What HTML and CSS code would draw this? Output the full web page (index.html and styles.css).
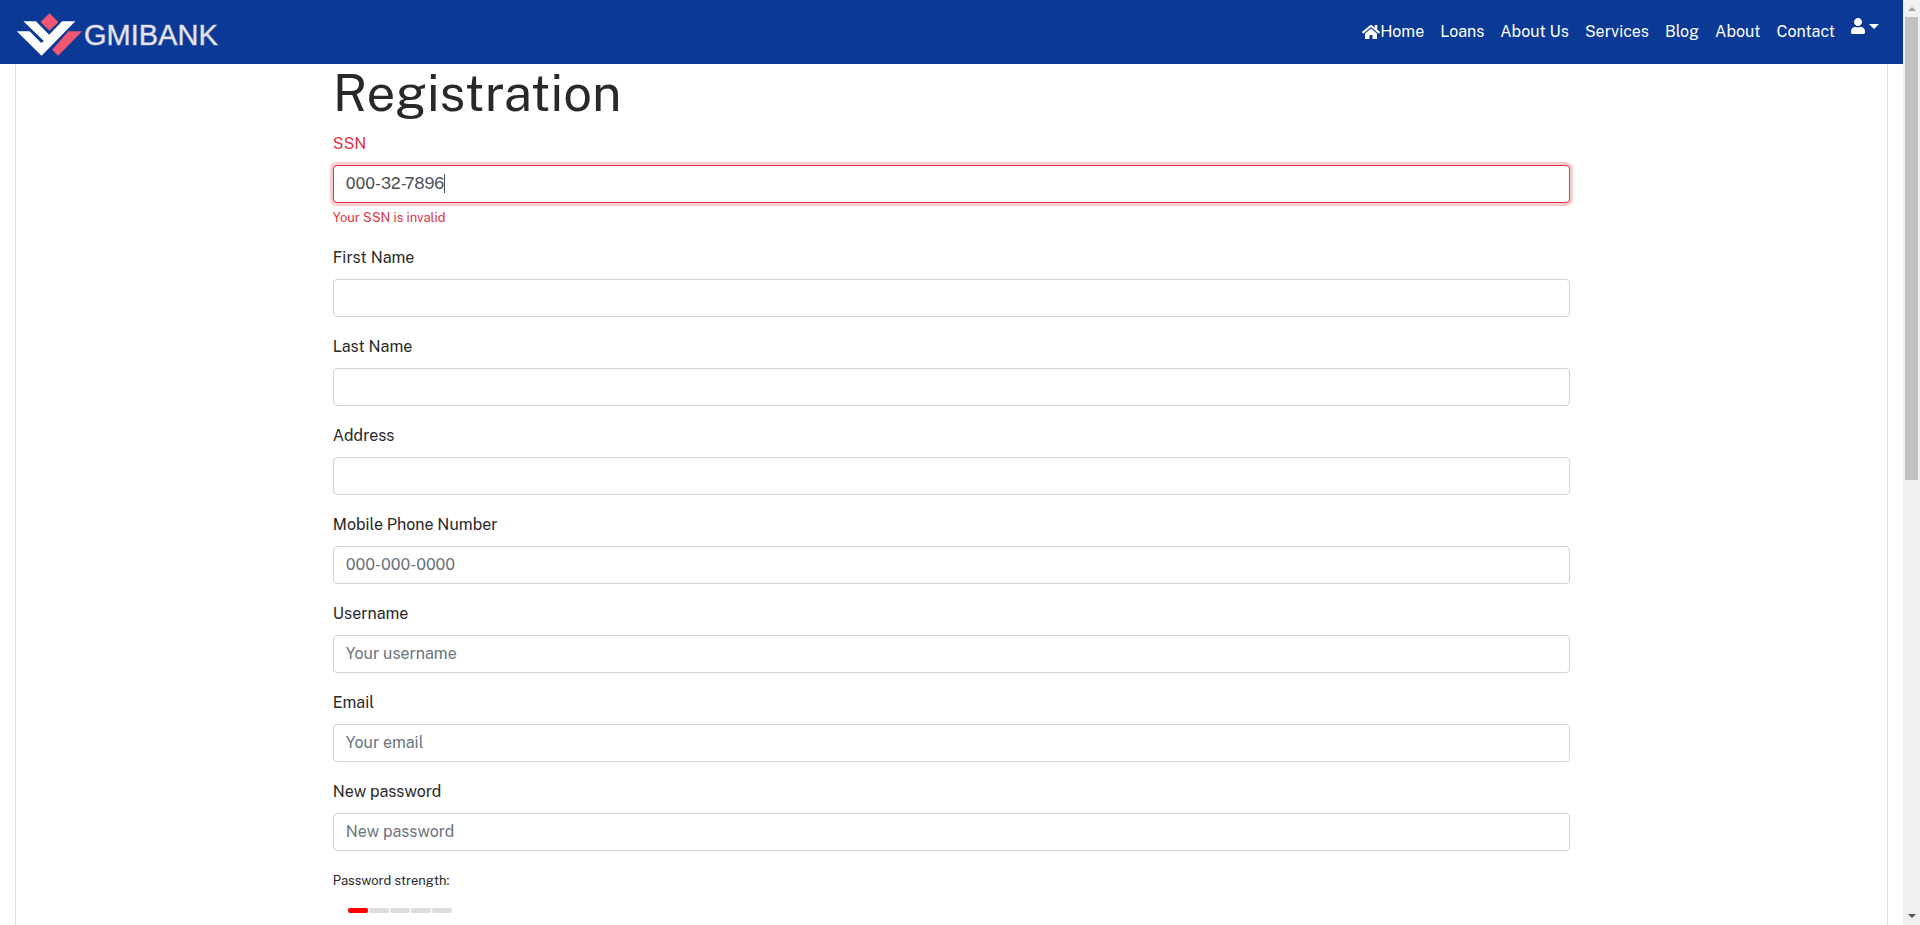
FILE: index.html
```html
<!DOCTYPE html>
<html lang="en">
<head>
<meta charset="utf-8">
<title>Registration</title>
<link rel="stylesheet" href="styles.css">
</head>
<body>
<div class="page">
  <header class="navbar">
    <a class="brand" href="#">
      <svg class="brand-mark" viewBox="0 0 200 130" aria-hidden="true">
        <path fill="#f15672" d="M100 1 127 27 100 54 73 27zM157 55H199L126 129 108 111z"/>
        <path fill="#fff" d="M21 25H59L99 66 138 25H178L76 129 1 55H40L75 91 83 85z"/>
      </svg>
      <span class="brand-name">GMIBANK</span>
    </a>
    <nav class="menu" aria-label="Main">
      <a class="menu-link" href="#"><svg class="home-icon" viewBox="0 0 576 512" aria-hidden="true"><path fill="currentColor" d="M280.37 148.26 96 300.11V464a16 16 0 0 0 16 16l112.06-.29a16 16 0 0 0 15.92-16V368a16 16 0 0 1 16-16h64a16 16 0 0 1 16 16v95.64a16 16 0 0 0 16 16.05L464 480a16 16 0 0 0 16-16V300L295.67 148.26a12.19 12.19 0 0 0-15.3 0zM571.6 251.47 488 182.56V44.05a12 12 0 0 0-12-12h-56a12 12 0 0 0-12 12v72.61L318.47 43a48 48 0 0 0-61 0L4.34 251.47a12 12 0 0 0-1.6 16.9l25.5 31A12 12 0 0 0 45.15 301l235.22-193.74a12.19 12.19 0 0 1 15.3 0L530.9 301a12 12 0 0 0 16.9-1.6l25.5-31a12 12 0 0 0-1.7-16.93z"/></svg>Home</a>
      <a class="menu-link" href="#">Loans</a>
      <a class="menu-link" href="#">About Us</a>
      <a class="menu-link" href="#">Services</a>
      <a class="menu-link" href="#">Blog</a>
      <a class="menu-link" href="#">About</a>
      <a class="menu-link" href="#">Contact</a>
      <button class="account" type="button" aria-label="Account"><svg class="user-icon" viewBox="0 0 448 512" aria-hidden="true"><path fill="currentColor" d="M224 256c70.700 0 128-57.300 128-128S294.700 0 224 0 96 57.300 96 128s57.300 128 128 128zm89.600 32h-16.700c-22.200 10.200-46.900 16-72.900 16s-50.600-5.800-72.900-16h-16.700C60.200 288 0 348.200 0 422.400V464c0 26.500 21.500 48 48 48h352c26.500 0 48-21.500 48-48v-41.600c0-74.200-60.200-134.400-134.400-134.400z"/></svg><span class="caret"></span></button>
    </nav>
  </header>
  <main class="card">
    <div class="row">
      <form class="form">
        <h1 class="title">Registration</h1>
        <div class="field invalid">
          <label class="label" for="ssn">SSN</label>
          <div class="control-wrap">
            <input class="control" id="ssn" type="text" value="000-32-7896" aria-describedby="ssn-error">
            <span class="text-cursor" aria-hidden="true"></span>
          </div>
          <div class="feedback" id="ssn-error">Your SSN is invalid</div>
        </div>
        <div class="field">
          <label class="label" for="first">First Name</label>
          <input class="control" id="first" type="text">
        </div>
        <div class="field">
          <label class="label" for="last">Last Name</label>
          <input class="control" id="last" type="text">
        </div>
        <div class="field">
          <label class="label" for="address">Address</label>
          <input class="control" id="address" type="text">
        </div>
        <div class="field">
          <label class="label" for="phone">Mobile Phone Number</label>
          <input class="control" id="phone" type="text" placeholder="000-000-0000">
        </div>
        <div class="field">
          <label class="label" for="username">Username</label>
          <input class="control" id="username" type="text" placeholder="Your username">
        </div>
        <div class="field">
          <label class="label" for="email">Email</label>
          <input class="control" id="email" type="email" placeholder="Your email">
        </div>
        <div class="field">
          <label class="label" for="password">New password</label>
          <input class="control" id="password" type="password" placeholder="New password">
        </div>
        <div class="strength">
          <small class="strength-label">Password strength:</small>
          <ul class="strength-bar">
            <li class="point weak"></li>
            <li class="point"></li>
            <li class="point"></li>
            <li class="point"></li>
            <li class="point"></li>
          </ul>
        </div>
      </form>
    </div>
  </main>
</div>
<div class="scrollbar" aria-hidden="true">
  <span class="arrow arrow-up"></span>
  <div class="track"><div class="thumb"></div></div>
  <span class="arrow arrow-down"></span>
</div>
</body>
</html>
```

FILE: styles.css
```css
* {
  box-sizing: border-box;
}

body {
  display: flex;
  height: 100vh;
  margin: 0;
  overflow: hidden;
  background: #fff;
  color: #292929;
  font-family: "Public Sans", Inter, "Liberation Sans", sans-serif;
  font-size: 16px;
  line-height: 27px;
}

.page {
  display: flex;
  flex: 1;
  flex-direction: column;
  min-width: 0;
}

.navbar {
  display: flex;
  flex: none;
  align-items: center;
  justify-content: space-between;
  height: 64px;
  padding: 0 24px 0 16px;
  background: #0a3996;
}

.brand {
  display: flex;
  align-items: center;
  gap: 1px;
  padding-top: 5px;
  color: #e6e2ea;
  text-decoration: none;
}

.brand-mark {
  width: 67px;
  height: 43px;
}

.brand-name {
  padding-top: 2px;
  font-family: "Liberation Sans", Arial, sans-serif;
  font-size: 29px;
  -webkit-text-stroke: 1px rgba(230, 226, 234, 0.4);
}

.menu {
  display: flex;
  align-items: center;
  gap: 16px;
}

.menu-link {
  display: flex;
  align-items: center;
  padding-bottom: 1px;
  color: #fff;
  text-decoration: none;
}

.home-icon {
  width: 18px;
  height: 16px;
}

.account {
  display: flex;
  align-items: center;
  gap: 4px;
  padding: 0 0 12px;
  border: 0;
  background: none;
  color: #fff;
}

.user-icon {
  width: 14px;
  height: 16px;
}

.caret {
  border: 5px solid transparent;
  border-top-color: currentColor;
  border-bottom: 0;
}

.card {
  flex: 1;
  min-height: 0;
  margin: 0 15px;
  border: solid #dfdfdf;
  border-width: 0 1px;
}

.row {
  display: flex;
  justify-content: center;
  margin: 0 -15px;
}

.form {
  flex: 0 0 66.6667%;
  padding: 0 15px;
}

.title {
  margin: 0 0 8px;
  font-size: 51px;
  font-weight: 400;
  line-height: 58px;
}

.field {
  margin-bottom: 16px;
}

.label {
  display: block;
  margin-bottom: 8px;
}

.control-wrap {
  position: relative;
}

.control {
  display: block;
  width: 100%;
  height: 38px;
  padding: 5px 12px 7px;
  border: 1px solid #ced4da;
  border-radius: 4px;
  outline: 0;
  background: #fff;
  color: #495057;
  font: inherit;
}

.control::placeholder {
  color: #6c757d;
  opacity: 1;
}

.text-cursor {
  position: absolute;
  top: 9px;
  left: 111px;
  width: 1px;
  height: 19px;
  background: #495057;
}

.invalid .label,
.feedback {
  color: #dc3545;
}

.invalid .control {
  border-color: #dc3545;
  box-shadow: 0 0 0 3px #f8cdd1;
}

.feedback {
  margin-top: 4px;
  font-size: 13px;
  line-height: 21px;
}

.strength-label {
  display: block;
  font-size: 13px;
}

.strength-bar {
  display: flex;
  gap: 1px;
  margin: 14px 0 0;
  padding: 0 0 0 15px;
  list-style: none;
}

.point {
  width: 20px;
  height: 5px;
  border-radius: 2px;
  background: #ddd;
}

.weak {
  background: #f00;
}

.scrollbar {
  display: flex;
  flex: 0 0 17px;
  flex-direction: column;
  align-items: center;
  padding: 7px 0;
  background: #f0f0f0;
}

.arrow {
  border: 4px solid transparent;
}

.arrow-up {
  border-top: 0;
  border-bottom-color: #a3a3a3;
}

.arrow-down {
  border-bottom: 0;
  border-top-color: #505050;
}

.track {
  flex: 1;
  width: 13px;
  margin: 6px 0;
}

.thumb {
  height: 52%;
  background: #c1c1c1;
}
```
